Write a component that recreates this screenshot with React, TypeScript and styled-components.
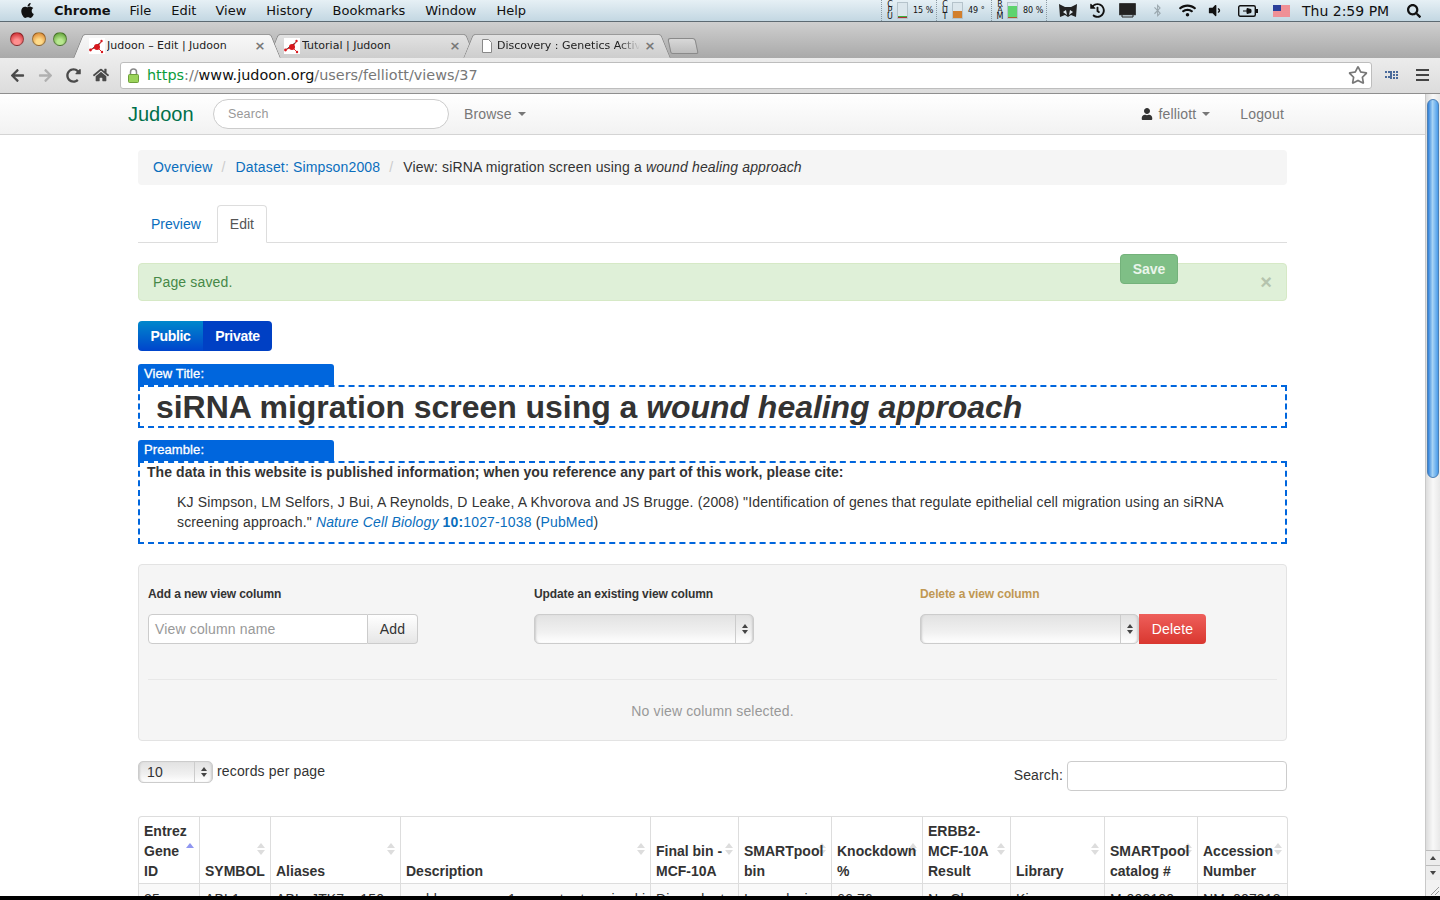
import React from 'react';
import styled, { createGlobalStyle } from 'styled-components';
import {
  FaApple, FaArrowLeft, FaArrowRight, FaRedoAlt, FaHome, FaRegStar, FaUser,
  FaHistory, FaBluetoothB, FaWifi, FaVolumeDown, FaSearch,
} from 'react-icons/fa';

const SANS = `'Liberation Sans', Arial, sans-serif`;
const SYSTEM = `'DejaVu Sans', 'Liberation Sans', sans-serif`;

const GlobalStyle = createGlobalStyle`
  html, body { margin: 0; padding: 0; height: 900px; overflow: hidden; background: #000; }
  * { box-sizing: border-box; }
`;

const Screen = styled.div`
  width: 1440px;
  height: 900px;
  display: flex;
  flex-direction: column;
  overflow: hidden;
  background: #000;
`;

/* ---- mac menu bar ---- */
const MenuBar = styled.div`
  flex: 0 0 22px;
  display: flex;
  align-items: center;
  padding-left: 19px;
  background: linear-gradient(#e6f0f5, #c3d7e2);
  border-bottom: 1px solid #5d6a72;
  font-family: ${SYSTEM};
  font-size: 13px;
  color: #111;
`;

const MenuItem = styled.span<{ $left: number; $bold?: boolean }>`
  margin-left: ${p => p.$left}px;
  font-weight: ${p => (p.$bold ? 700 : 400)};
  white-space: nowrap;
`;

const Status = styled.div`
  margin-left: auto;
  padding-right: 10px;
  display: flex;
  align-items: center;
  height: 21px;
`;

const MeterBox = styled.div`
  flex: 0 0 55px;
  height: 21px;
  display: flex;
  align-items: center;
  gap: 3px;
  padding-left: 4px;
  border-left: 1px dotted #8b9aa3;
`;

const MeterLabel = styled.span`
  flex: none;
  width: 8px;
  font-family: ${SYSTEM};
  font-size: 8px;
  line-height: 6px;
  text-align: center;
  white-space: pre-line;
`;

const MeterTrack = styled.div`
  flex: none;
  width: 11px;
  height: 17px;
  display: flex;
  align-items: flex-end;
  background: #dbe6ec;
  border: 1px solid #b5c3cb;
`;

const MeterFill = styled.div<{ $color: string; $base?: string }>`
  width: 100%;
  background: ${p => p.$color};
  box-shadow: inset 0 -1px ${p => p.$base ?? p.$color};
`;

const MeterValue = styled.span`
  margin-left: 2px;
  font-family: ${SYSTEM};
  font-size: 8px;
  white-space: nowrap;
`;

const StatusSlot = styled.div<{ $w: number; $muted?: boolean; $divider?: boolean }>`
  flex: 0 0 ${p => p.$w}px;
  height: 21px;
  display: flex;
  justify-content: center;
  align-items: center;
  color: ${p => (p.$muted ? '#9aa7ae' : '#111')};
  font-size: 15px;
  border-left: ${p => (p.$divider ? '1px dotted #8b9aa3' : '0')};
`;

const Clock = styled.span`
  width: 102px;
  padding-left: 7px;
  font-size: 14px;
  white-space: nowrap;
`;

/* ---- chrome tabs ---- */
const TabStrip = styled.div`
  flex: 0 0 36px;
  display: flex;
  align-items: flex-end;
  padding-left: 84px;
  position: relative;
  background: linear-gradient(#cfcfcf, #a9a9a9);
`;

const Lights = styled.div`
  position: absolute;
  left: 10px;
  top: 10px;
  display: flex;
  gap: 7.5px;
`;

const Light = styled.span<{ $c: string; $d: string }>`
  width: 14px;
  height: 14px;
  border-radius: 50%;
  background: radial-gradient(circle at 50% 75%, ${p => p.$c} 25%, ${p => p.$d} 90%);
  border: 1px solid rgba(0, 0, 0, .35);
`;

const Tab = styled.div<{ $active?: boolean }>`
  position: relative;
  width: 186px;
  height: 24px;
  margin-right: 9px;
  display: flex;
  align-items: center;
  padding-left: 5px;
  padding-bottom: 2px;
  font-family: ${SYSTEM};
  font-size: 11px;
  color: #222;
  background: ${p => (p.$active ? 'linear-gradient(#f7f7f7, #ececec)' : 'linear-gradient(#e2e2e2, #cdcdcd)')};
  border-top: 1px solid #9a9a9a;
  z-index: ${p => (p.$active ? 2 : 1)};
  &::before, &::after {
    content: '';
    position: absolute;
    top: -1px;
    bottom: 0;
    width: 12px;
    background: inherit;
    border-top: 1px solid #9a9a9a;
  }
  &::before {
    left: -6px;
    transform: skewX(-22deg);
    border-left: 1px solid #8a8a8a;
    border-top-left-radius: 3px;
  }
  &::after {
    right: -6px;
    transform: skewX(22deg);
    border-right: 1px solid #8a8a8a;
    border-top-right-radius: 3px;
  }
`;

const TabTitle = styled.span<{ $fade?: boolean }>`
  position: relative;
  z-index: 1;
  flex: 1;
  overflow: hidden;
  white-space: nowrap;
  margin-left: 2px;
  ${p => (p.$fade ? 'mask-image: linear-gradient(90deg, #000 85%, transparent);' : '')}
`;

const TabClose = styled.span`
  position: relative;
  z-index: 1;
  width: 20px;
  color: #777;
  font-size: 13px;
  font-weight: 700;
  text-align: center;
`;

const Favicon = styled.svg`
  position: relative;
  z-index: 1;
  flex: none;
`;

const NewTab = styled.div`
  width: 28px;
  height: 16px;
  margin: 0 0 4px 0;
  background: linear-gradient(#d8d8d8, #bdbdbd);
  border: 1px solid #8a8a8a;
  border-radius: 3px 3px 2px 2px;
  transform: skewX(12deg);
`;

/* ---- chrome toolbar ---- */
const Toolbar = styled.div`
  flex: 0 0 36px;
  display: flex;
  align-items: center;
  padding: 0 10px 1px 0;
  background: linear-gradient(#ececec, #dcdcdc);
  border-bottom: 1px solid #8f8f8f;
`;

const NavButton = styled.div<{ $w: number; $off?: boolean }>`
  width: ${p => p.$w}px;
  display: flex;
  justify-content: center;
  color: ${p => (p.$off ? '#b0b0b0' : '#4a4a4a')};
  font-size: 15px;
`;

const Omnibox = styled.div`
  width: 1252px;
  height: 27px;
  margin-left: 8px;
  padding: 0 3px 0 7px;
  display: flex;
  align-items: center;
  background: #fff;
  border: 1px solid #bdbdbd;
  border-radius: 3px;
  font-family: ${SYSTEM};
  font-size: 14.4px;
  white-space: nowrap;
`;

const Padlock = styled.svg`
  margin-right: 8px;
  flex: none;
`;

const UrlPart = styled.span<{ $c: string }>`
  color: ${p => p.$c};
`;

const StarSlot = styled.span`
  margin-left: auto;
  display: flex;
  color: #777;
  font-size: 20px;
`;

const ExtIcon = styled.svg`
  margin-left: 12px;
`;

const Burger = styled.div`
  width: 13px;
  margin-left: 16px;
  height: 12px;
  background: repeating-linear-gradient(#444 0 2.5px, transparent 2.5px 5px);
`;

/* ---- page ---- */
const Viewport = styled.div`
  flex: 1;
  min-height: 0;
  display: flex;
  background: #fff;
`;

const Page = styled.div`
  flex: 1;
  min-width: 0;
  overflow: hidden;
  font-family: ${SANS};
  font-size: 14px;
  line-height: 20px;
  letter-spacing: .15px;
  color: #333;
`;

const Navbar = styled.div`
  height: 41px;
  display: flex;
  align-items: center;
  padding: 0 141px 0 128px;
  background: linear-gradient(#fff, #f2f2f2);
  border-bottom: 1px solid #d4d4d4;
`;

const Brand = styled.span`
  width: 85px;
  font-size: 20px;
  letter-spacing: 0;
  color: #00704a;
`;

const NavSearch = styled.div`
  width: 236px;
  height: 30px;
  padding-left: 14px;
  display: flex;
  align-items: center;
  background: #fff;
  border: 1px solid #ccc;
  border-radius: 15px;
  font-size: 12.5px;
  color: #999;
`;

const NavLink = styled.span<{ $left?: number }>`
  margin-left: ${p => p.$left ?? 0}px;
  display: flex;
  align-items: center;
  color: #777;
`;

const Caret = styled.span<{ $c?: string }>`
  display: inline-block;
  margin-left: 6px;
  border-top: 4px solid ${p => p.$c ?? '#777'};
  border-left: 4px solid transparent;
  border-right: 4px solid transparent;
`;

const NavSpacer = styled.div`
  flex: 1;
`;

const UserIcon = styled(FaUser)`
  color: #333;
  font-size: 12px;
  margin-right: 5px;
`;

const Container = styled.div`
  width: 1149px;
  margin-left: 138px;
`;

const Breadcrumb = styled.div`
  height: 35px;
  margin-top: 15px;
  padding: 0 15px 2px;
  display: flex;
  align-items: center;
  background: #f5f5f5;
  border-radius: 4px;
  white-space: pre;
`;

const Link = styled.a`
  color: #0a6ebd;
`;

const Sep = styled.span`
  margin: 0 10px 0 9px;
  color: #ccc;
`;

const Tabs = styled.div`
  display: flex;
  height: 38px;
  margin-top: 20px;
  border-bottom: 1px solid #ddd;
`;

const PageTab = styled.div<{ $active?: boolean }>`
  height: 38px;
  padding: 8px 12px;
  margin-right: 3px;
  letter-spacing: 0;
  color: ${p => (p.$active ? '#555' : '#0a6ebd')};
  background: ${p => (p.$active ? '#fff' : 'transparent')};
  border: 1px solid ${p => (p.$active ? '#ddd' : 'transparent')};
  border-bottom-color: ${p => (p.$active ? '#fff' : 'transparent')};
  border-radius: 4px 4px 0 0;
`;

const Alert = styled.div`
  position: relative;
  height: 38px;
  margin-top: 20px;
  padding: 8px 14px;
  background: #dff0d8;
  border: 1px solid #d6e9c6;
  border-radius: 4px;
  color: #468847;
`;

const SaveButton = styled.button`
  position: absolute;
  left: 981px;
  top: -10px;
  width: 58px;
  height: 30px;
  padding: 0;
  background: #7fbf86;
  border: 1px solid #74b27b;
  border-radius: 4px;
  color: #eaf5eb;
  font: 700 14px ${SANS};
`;

const AlertClose = styled.span`
  position: absolute;
  right: 14px;
  top: 8px;
  color: #b5c4ae;
  font-size: 20px;
  font-weight: 700;
`;

const Toggle = styled.div`
  display: flex;
  width: 134px;
  height: 30px;
  margin-top: 20px;
  border-radius: 4px;
  overflow: hidden;
`;

const ToggleButton = styled.div<{ $on?: boolean; $w: number }>`
  width: ${p => p.$w}px;
  display: flex;
  align-items: center;
  justify-content: center;
  color: #fff;
  font-weight: 700;
  letter-spacing: -.3px;
  background: ${p => (p.$on ? 'linear-gradient(#0088cc, #0044cc)' : '#0040c4')};
`;

const EditorLabel = styled.div<{ $top: number }>`
  width: 196px;
  height: 21px;
  margin-top: ${p => p.$top}px;
  padding-left: 6px;
  background: #0066dd;
  border-radius: 3px 3px 0 0;
  color: #fff;
  font-size: 13px;
  line-height: 20px;
  letter-spacing: .1px;
  -webkit-text-stroke: .3px #fff;
`;

const TitleBox = styled.div`
  height: 43px;
  padding-left: 16px;
  border: 2px dashed #0066dd;
  font-size: 32px;
  font-weight: 700;
  line-height: 40px;
  letter-spacing: -.04px;
  white-space: nowrap;
`;

const PreambleBox = styled.div`
  height: 83px;
  padding: 0 7px;
  border: 2px dashed #0066dd;
`;

const PreambleLead = styled.div`
  margin-top: -1px;
  font-weight: 700;
  letter-spacing: .07px;
`;

const Citation = styled.div`
  margin: 10px 30px 0;
`;

const Well = styled.div`
  height: 177px;
  margin-top: 20px;
  padding: 19px 9px 0;
  background: #f5f5f5;
  border: 1px solid #e3e3e3;
  border-radius: 4px;
  font-size: 12px;
`;

const WellGrid = styled.div`
  display: grid;
  grid-template-columns: repeat(3, 386px);
  height: 96px;
  border-bottom: 1px solid #e8e8e8;
`;

const FieldLabel = styled.div<{ $warn?: boolean }>`
  font-weight: 700;
  letter-spacing: -.1px;
  color: ${p => (p.$warn ? '#c09853' : '#333')};
`;

const FieldRow = styled.div`
  display: flex;
  height: 30px;
  margin-top: 10px;
`;

const ColumnInput = styled.div`
  width: 220px;
  padding-left: 6px;
  display: flex;
  align-items: center;
  background: #fff;
  border: 1px solid #ccc;
  border-radius: 4px 0 0 4px;
  font-size: 14px;
  color: #999;
`;

const AddButton = styled.div`
  width: 50px;
  display: flex;
  align-items: center;
  justify-content: center;
  background: linear-gradient(#fff, #e6e6e6);
  border: 1px solid #ccc;
  border-left: 0;
  border-radius: 0 4px 4px 0;
  font-size: 14px;
`;

const SelectBody = styled.div<{ $w: number; $h?: number }>`
  width: ${p => p.$w}px;
  height: ${p => p.$h ?? 30}px;
  display: flex;
  background: linear-gradient(#e2e2e2, #f0f0f0 60%, #fff);
  border: 1px solid #ccc;
  border-radius: 5px;
  box-shadow: inset 2px 0 2px -1px #ccc, inset -2px 0 2px -1px #ccc;
  font-size: 14px;
  line-height: 20px;
`;

const SelectValue = styled.span`
  flex: 1;
  padding-left: 8px;
`;

const SelectArrows = styled.span`
  width: 18px;
  display: flex;
  flex-direction: column;
  align-items: center;
  justify-content: center;
  gap: 2px;
  border-left: 1px solid #ccc;
`;

const Arrow = styled.i<{ $up?: boolean; $c?: string; $s?: number }>`
  display: block;
  border-left: ${p => p.$s ?? 3}px solid transparent;
  border-right: ${p => p.$s ?? 3}px solid transparent;
  ${p => (p.$up ? 'border-bottom' : 'border-top')}: ${p => (p.$s ?? 3) + 1}px solid ${p => p.$c ?? '#444'};
`;

const DeleteButton = styled.div`
  width: 67px;
  display: flex;
  align-items: center;
  justify-content: center;
  background: linear-gradient(#ee5f5b, #d9372f);
  border-radius: 0 4px 4px 0;
  color: #fff;
  font-size: 14px;
`;

const NoSelection = styled.div`
  margin-top: 21px;
  text-align: center;
  font-size: 14px;
  color: #999;
`;

const TableControls = styled.div`
  display: flex;
  justify-content: space-between;
  height: 30px;
  margin-top: 20px;
`;

const Length = styled.div`
  display: flex;
  gap: 4px;
  height: 22px;
`;

const Filter = styled.div`
  display: flex;
  align-items: center;
  gap: 4px;
`;

const FilterLabel = styled.span`
  margin-bottom: 2px;
`;

const FilterInput = styled.div`
  width: 220px;
  height: 30px;
  background: #fff;
  border: 1px solid #ccc;
  border-radius: 4px;
`;

const Table = styled.table`
  isolation: isolate;
  width: 1148px;
  margin-top: 25px;
  table-layout: fixed;
  border-collapse: separate;
  border-spacing: 0;
  border: 1px solid #ddd;
  border-bottom: 0;
  border-radius: 4px 4px 0 0;
`;

const Th = styled.th`
  position: relative;
  padding: 4px 5px 2px;
  text-align: left;
  vertical-align: bottom;
  letter-spacing: 0;
  border-left: 1px solid #ddd;
  border-bottom: 1px solid #ddd;
  overflow: visible;
  &:first-child { border-left: 0; }
`;

const Td = styled.td`
  height: 30px;
  padding: 5px;
  background: #f9f9f9;
  border-left: 1px solid #ddd;
  white-space: nowrap;
  overflow: hidden;
  &:first-child { border-left: 0; }
`;

const SortIcon = styled.span`
  position: absolute;
  right: 5px;
  top: 26px;
  z-index: -1;
  display: flex;
  flex-direction: column;
  gap: 2px;
`;

/* ---- scrollbar ---- */
const Scrollbar = styled.div`
  flex: 0 0 15px;
  display: flex;
  flex-direction: column;
  padding-top: 5px;
  background: linear-gradient(90deg, #dcdcdc, #f8f8f8 50%, #e8e8e8);
  border-left: 1px solid #c9c9c9;
`;

const Thumb = styled.div`
  height: 379px;
  margin: 0 1px;
  border-radius: 7px;
  border: 1px solid #4a7fb5;
  background: linear-gradient(90deg, #2f7fd8, #a6d3f5 45%, #4a9cea);
`;

const ScrollTrack = styled.div`
  flex: 1;
`;

const ScrollButton = styled.div`
  height: 15px;
  display: flex;
  align-items: center;
  justify-content: center;
  background: #ececec;
  border-top: 1px solid #bbb;
`;

const Grip = styled.div`
  height: 16px;
  display: flex;
  align-items: flex-end;
  justify-content: flex-end;
  background: #f2f2f2;
`;

const BlackEdge = styled.div`
  flex: 0 0 4px;
  background: #000;
`;

const columns: { name: string; width: number; cell: string }[] = [
  { name: 'Entrez Gene ID', width: 60, cell: '25' },
  { name: 'SYMBOL', width: 71, cell: 'ABL1' },
  { name: 'Aliases', width: 130, cell: 'ABL; JTK7; p150' },
  { name: 'Description', width: 250, cell: 'c-abl oncogene 1, receptor tyrosine kinase' },
  { name: 'Final bin - MCF-10A', width: 88, cell: 'Discordant' },
  { name: 'SMARTpool bin', width: 93, cell: 'Inconclusive' },
  { name: 'Knockdown %', width: 91, cell: '66.76' },
  { name: 'ERBB2- MCF-10A Result', width: 88, cell: 'No Change' },
  { name: 'Library', width: 94, cell: 'Kinase' },
  { name: 'SMARTpool catalog #', width: 93, cell: 'M-003100' },
  { name: 'Accession Number', width: 90, cell: 'NM_007313' },
];

const MoleculeIcon = () => (
  <Favicon width="16" height="16" viewBox="0 0 16 16">
    <rect width="16" height="16" fill="#fff" />
    <path d="M1 12 8 9l5-6M8 9l5 5" stroke="#d33" strokeWidth="1" />
    <circle cx="8" cy="9" r="3" fill="#d8171d" />
    <circle cx="1.500" cy="12" r="1.400" fill="#d8171d" />
    <circle cx="12.500" cy="3" r="1.200" fill="#d8171d" />
    <circle cx="13" cy="14" r="1.200" fill="#d8171d" />
  </Favicon>
);

const Meter = ({ label, level, color, base, value }: { label: string; level: number; color: string; base?: string; value: string }) => (
  <MeterBox>
    <MeterLabel>{label}</MeterLabel>
    <MeterTrack>
      <MeterFill $color={color} $base={base} style={{ height: `${level}%` }} />
    </MeterTrack>
    <MeterValue>{value}</MeterValue>
  </MeterBox>
);

const UpDown = ({ c, s }: { c?: string; s?: number }) => (
  <>
    <Arrow $up $c={c} $s={s} />
    <Arrow $c={c} $s={s} />
  </>
);

const App: React.FC = () => (
  <Screen>
    <GlobalStyle />
    <MenuBar>
      <FaApple size={17} />
      <MenuItem $left={18} $bold>Chrome</MenuItem>
      <MenuItem $left={19}>File</MenuItem>
      <MenuItem $left={20}>Edit</MenuItem>
      <MenuItem $left={19}>View</MenuItem>
      <MenuItem $left={20}>History</MenuItem>
      <MenuItem $left={20}>Bookmarks</MenuItem>
      <MenuItem $left={20}>Window</MenuItem>
      <MenuItem $left={20}>Help</MenuItem>
      <Status>
        <Meter label={'C\nP\nU'} level={15} color="#3fae3f" base="#a33" value="15 %" />
        <Meter label={'C\nU\nT'} level={49} color="#d27f2c" value="49 °" />
        <Meter label={'R\nA\nM'} level={80} color="#5ed36e" base="#a5622c" value="80 %" />
        <StatusSlot $w={11} $divider />
        <StatusSlot $w={22}>
          <svg width="18" height="14" viewBox="0 0 18 14">
            <path d="M0 0l6 3h6l6-3-1 13-5-2-3 2-3-2-5 2z" fill="#222" />
            <path d="M4 8l3-2 1 5zM14 8l-3-2-1 5z" fill="#dfe9ee" />
          </svg>
        </StatusSlot>
        <StatusSlot $w={36}><FaHistory /></StatusSlot>
        <StatusSlot $w={24}>
          <svg width="17" height="15" viewBox="0 0 17 15">
            <rect x=".7" y=".7" width="15.600" height="11" fill="#222" stroke="#222" />
            <path d="M3 12v2h11v-2" fill="none" stroke="#222" />
          </svg>
        </StatusSlot>
        <StatusSlot $w={36} $muted><FaBluetoothB size={13} /></StatusSlot>
        <StatusSlot $w={24}><FaWifi size={17} /></StatusSlot>
        <StatusSlot $w={30}><FaVolumeDown /></StatusSlot>
        <StatusSlot $w={38}>
          <svg width="20" height="12" viewBox="0 0 20 12">
            <rect x=".7" y=".7" width="16.600" height="10.600" rx="1.500" fill="none" stroke="#111" strokeWidth="1.400" />
            <rect x="18" y="4" width="2" height="4" fill="#111" />
            <path d="M5 6h4M9 3.500v5l4-1V4.500z" stroke="#111" fill="#111" />
          </svg>
        </StatusSlot>
        <StatusSlot $w={28}>
          <svg width="17" height="12" viewBox="0 0 17 12">
            <rect width="17" height="12" fill="#fff" />
            <path d="M0 1h17M0 3h17M0 5h17M0 7h17M0 9h17M0 11h17" stroke="#e0202c" />
            <rect width="8" height="6" fill="#2a3f9a" />
          </svg>
        </StatusSlot>
        <Clock>Thu 2:59 PM</Clock>
        <StatusSlot $w={33}><FaSearch size={14} /></StatusSlot>
      </Status>
    </MenuBar>

    <TabStrip>
      <Lights>
        <Light $c="#ff8f8f" $d="#c9252b" />
        <Light $c="#ffdb8a" $d="#d9822b" />
        <Light $c="#b8e890" $d="#5c9e32" />
      </Lights>
      <Tab $active>
        <MoleculeIcon />
        <TabTitle>Judoon – Edit | Judoon</TabTitle>
        <TabClose>×</TabClose>
      </Tab>
      <Tab>
        <MoleculeIcon />
        <TabTitle>Tutorial | Judoon</TabTitle>
        <TabClose>×</TabClose>
      </Tab>
      <Tab>
        <Favicon width="16" height="16" viewBox="0 0 16 16">
          <path d="M3.500 1.500h6l3 3v10h-9z" fill="#fff" stroke="#888" />
        </Favicon>
        <TabTitle $fade>Discovery : Genetics Activit</TabTitle>
        <TabClose>×</TabClose>
      </Tab>
      <NewTab />
    </TabStrip>

    <Toolbar>
      <NavButton $w={34}><FaArrowLeft /></NavButton>
      <NavButton $w={22} $off><FaArrowRight /></NavButton>
      <NavButton $w={34}><FaRedoAlt /></NavButton>
      <NavButton $w={22}><FaHome size={16} /></NavButton>
      <Omnibox>
        <Padlock width="11" height="15" viewBox="0 0 11 15">
          <path d="M2.500 7V4a3 3 0 0 1 6 0v3" fill="none" stroke="#888" strokeWidth="1.500" />
          <rect x=".5" y="6.500" width="10" height="8" rx="1" fill="#9bd35a" stroke="#6d9e3a" />
        </Padlock>
        <UrlPart $c="#0a9c3a">https</UrlPart>
        <UrlPart $c="#777">://</UrlPart>
        <UrlPart $c="#111">www.judoon.org</UrlPart>
        <UrlPart $c="#777">/users/felliott/views/37</UrlPart>
        <StarSlot><FaRegStar /></StarSlot>
      </Omnibox>
      <ExtIcon width="16" height="8" viewBox="0 0 14 8">
        <path d="M0 1h2M3 1h2M0 6h2M3 6h2M6 0v8M8 1h2M11 1h2M8 4h2M11 4h2M8 7h2M11 7h2" stroke="#4a6a9a" strokeWidth="2" />
      </ExtIcon>
      <Burger />
    </Toolbar>

    <Viewport>
      <Page>
        <Navbar>
          <Brand>Judoon</Brand>
          <NavSearch>Search</NavSearch>
          <NavLink $left={15}>Browse<Caret /></NavLink>
          <NavSpacer />
          <NavLink><UserIcon />felliott<Caret /></NavLink>
          <NavLink $left={30}>Logout</NavLink>
        </Navbar>
        <Container>
          <Breadcrumb>
            <Link>Overview</Link>
            <Sep>/</Sep>
            <Link>Dataset: Simpson2008</Link>
            <Sep>/</Sep>
            <span>View: siRNA migration screen using a <em>wound healing approach</em></span>
          </Breadcrumb>
          <Tabs>
            <PageTab>Preview</PageTab>
            <PageTab $active>Edit</PageTab>
          </Tabs>
          <Alert>
            Page saved.
            <SaveButton>Save</SaveButton>
            <AlertClose>×</AlertClose>
          </Alert>
          <Toggle>
            <ToggleButton $on $w={65}>Public</ToggleButton>
            <ToggleButton $w={69}>Private</ToggleButton>
          </Toggle>
          <EditorLabel $top={13}>View Title:</EditorLabel>
          <TitleBox>siRNA migration screen using a <em>wound healing approach</em></TitleBox>
          <EditorLabel $top={12}>Preamble:</EditorLabel>
          <PreambleBox>
            <PreambleLead>The data in this website is published information; when you reference any part of this work, please cite:</PreambleLead>
            <Citation>
              KJ Simpson, LM Selfors, J Bui, A Reynolds, D Leake, A Khvorova and JS Brugge. (2008) "Identification of genes that regulate epithelial cell migration using an siRNA screening approach." <Link><em>Nature Cell Biology</em> <b>10:</b>1027-1038</Link> (<Link>PubMed</Link>)
            </Citation>
          </PreambleBox>
          <Well>
            <WellGrid>
              <div>
                <FieldLabel>Add a new view column</FieldLabel>
                <FieldRow>
                  <ColumnInput>View column name</ColumnInput>
                  <AddButton>Add</AddButton>
                </FieldRow>
              </div>
              <div>
                <FieldLabel>Update an existing view column</FieldLabel>
                <FieldRow>
                  <SelectBody $w={220}>
                    <SelectValue />
                    <SelectArrows><UpDown /></SelectArrows>
                  </SelectBody>
                </FieldRow>
              </div>
              <div>
                <FieldLabel $warn>Delete a view column</FieldLabel>
                <FieldRow>
                  <SelectBody $w={219}>
                    <SelectValue />
                    <SelectArrows><UpDown /></SelectArrows>
                  </SelectBody>
                  <DeleteButton>Delete</DeleteButton>
                </FieldRow>
              </div>
            </WellGrid>
            <NoSelection>No view column selected.</NoSelection>
          </Well>
          <TableControls>
            <Length>
              <SelectBody $w={75} $h={22}>
                <SelectValue>10</SelectValue>
                <SelectArrows><UpDown /></SelectArrows>
              </SelectBody>
              records per page
            </Length>
            <Filter>
              <FilterLabel>Search:</FilterLabel>
              <FilterInput />
            </Filter>
          </TableControls>
          <Table>
            <colgroup>
              {columns.map(c => <col key={c.name} width={c.width} />)}
            </colgroup>
            <thead>
              <tr>
                {columns.map((c, i) => (
                  <Th key={c.name}>
                    {c.name}
                    <SortIcon>
                      {i === 0 ? <Arrow $up $c="#8f96f0" $s={4} /> : <UpDown c="#ddd" s={4} />}
                    </SortIcon>
                  </Th>
                ))}
              </tr>
            </thead>
            <tbody>
              <tr>
                {columns.map(c => <Td key={c.name}>{c.cell}</Td>)}
              </tr>
            </tbody>
          </Table>
        </Container>
      </Page>
      <Scrollbar>
        <Thumb />
        <ScrollTrack />
        <ScrollButton><Arrow $up /></ScrollButton>
        <ScrollButton><Arrow /></ScrollButton>
        <Grip>
          <svg width="12" height="12" viewBox="0 0 12 12">
            <path d="M11 3 3 11M11 7l-4 4" stroke="#999" fill="none" />
          </svg>
        </Grip>
      </Scrollbar>
    </Viewport>
    <BlackEdge />
  </Screen>
);

export default App;
